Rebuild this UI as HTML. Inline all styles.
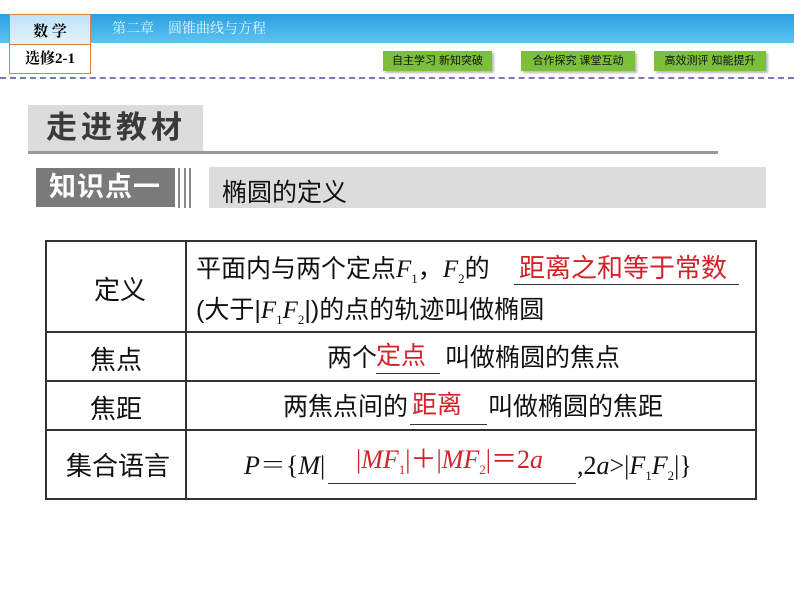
<!DOCTYPE html>
<html><head><meta charset="utf-8"><style>
body{margin:0;width:794px;height:596px;background:#fff;position:relative;overflow:hidden;font-family:"Liberation Sans","Noto Sans CJK SC",sans-serif}
.a{position:absolute}
.bar{left:0;top:14px;width:794px;height:29px;background:linear-gradient(#2c9fe0,#5cc4f2)}
.box{left:9px;top:14px;width:80px;height:58px;border:1px solid #d9833c;background:#fff}
.box .t{height:29px;background:linear-gradient(#bfe3f7,#e3f3fc);border-bottom:1px solid #d9833c;text-align:center;font:bold 15px "Liberation Serif","Noto Serif CJK SC",serif;line-height:34px}
.box .b{text-align:center;font:bold 15px "Liberation Serif","Noto Serif CJK SC",serif;line-height:28px}
.ch{left:112px;top:18px;color:#e8f6ff;font:14px "Noto Serif CJK SC",serif}
.dot{left:0;top:77px;width:794px;border-top:2px dashed #7b79b8}
.g{top:51px;height:20px;background:#7cbf3a;font-size:11px;line-height:20px;text-align:center;color:#111;box-shadow:2px 2px 2px #bbb}
.tx{position:absolute;font-size:24px;line-height:28px;color:#111;white-space:nowrap}
.r{color:#d2232a}
.u{position:absolute;height:1px;background:#333}
i{font-family:"Liberation Serif",serif}
sub{font-size:13px;font-family:"Liberation Serif",serif}
</style></head><body>
<div class="a bar"></div>
<div class="a box"><div class="t">数 学</div><div class="b">选修2-1</div></div>
<div class="a ch">第二章　圆锥曲线与方程</div>
<div class="a dot"></div>
<div class="a g" style="left:383px;width:109px">自主学习&nbsp;新知突破</div>
<div class="a g" style="left:521px;width:114px">合作探究&nbsp;课堂互动</div>
<div class="a g" style="left:654px;width:112px">高效测评&nbsp;知能提升</div>

<div class="a" style="left:28px;top:105px;width:175px;height:47px;background:#dcdcdc"></div>
<div class="a" style="left:46px;top:110px;font-size:31px;line-height:36px;letter-spacing:4px;font-weight:bold;color:#3a3a3a">走进教材</div>
<div class="a" style="left:28px;top:151px;width:690px;height:3px;background:#999"></div>

<div class="a" style="left:36px;top:168px;width:139px;height:39px;background:#7a7a7a"></div>
<div class="a" style="left:49px;top:171px;font-size:27px;line-height:32px;letter-spacing:1px;font-weight:bold;color:#fff">知识点一</div>
<div class="a" style="left:178px;top:168px;width:2px;height:40px;background:#888"></div>
<div class="a" style="left:184px;top:168px;width:2px;height:40px;background:#888"></div>
<div class="a" style="left:189px;top:168px;width:2px;height:40px;background:#888"></div>
<div class="a" style="left:209px;top:167px;width:557px;height:41px;background:#dcdcdc"></div>
<div class="a" style="left:222px;top:173px;font-size:25px;color:#111">椭圆的定义</div>

<div class="a" style="left:45px;top:240px;width:712px;height:260px;border:2px solid #333;box-sizing:border-box"></div>
<div class="a" style="left:185px;top:240px;width:2px;height:260px;background:#333"></div>
<div class="a" style="left:45px;top:331px;width:712px;height:2px;background:#333"></div>
<div class="a" style="left:45px;top:380px;width:712px;height:2px;background:#333"></div>
<div class="a" style="left:45px;top:429px;width:712px;height:2px;background:#333"></div>

<div class="tx" style="left:94px;top:276px;font-size:26px">定义</div>
<div class="tx" style="left:90px;top:346px;font-size:26px">焦点</div>
<div class="tx" style="left:90px;top:395px;font-size:26px">焦距</div>
<div class="tx" style="left:66px;top:452px;font-size:26px">集合语言</div>

<div class="tx" style="left:196px;top:255px;font-size:25px">平面内与两个定点<i>F</i><sub>1</sub>，<i>F</i><sub>2</sub>的</div>
<div class="u" style="left:514px;top:284px;width:225px"></div>
<div class="tx r" style="left:519px;top:254px;font-size:26px">距离之和等于常数</div>
<div class="tx" style="left:196px;top:296px;font-size:25px">(大于|<i>F</i><sub>1</sub><i>F</i><sub>2</sub>|)的点的轨迹叫做椭圆</div>

<div class="tx" style="left:327px;top:344px;font-size:25px">两个</div>
<div class="tx r" style="left:376px;top:342px;font-size:25px">定点</div>
<div class="u" style="left:376px;top:373px;width:64px"></div>
<div class="tx" style="left:445px;top:344px;font-size:25px">叫做椭圆的焦点</div>

<div class="tx" style="left:283px;top:393px;font-size:25px">两焦点间的</div>
<div class="tx r" style="left:412px;top:391px;font-size:25px">距离</div>
<div class="u" style="left:410px;top:424px;width:77px"></div>
<div class="tx" style="left:488px;top:393px;font-size:25px">叫做椭圆的焦距</div>

<div class="tx" style="left:244px;top:452px;font-size:26px;font-family:'Liberation Serif','Noto Serif CJK SC',serif"><i>P</i>＝{<i>M</i>|</div>
<div class="u" style="left:328px;top:483px;width:248px"></div>
<div class="tx r" style="left:356px;top:446px;font-size:26px;font-family:'Liberation Serif','Noto Sans CJK SC',serif">|<i>MF</i><sub>1</sub>|＋|<i>MF</i><sub>2</sub>|＝2<i>a</i></div>
<div class="tx" style="left:577px;top:452px;font-size:26px;font-family:'Liberation Serif',serif">,2<i>a</i>&gt;|<i>F</i><sub>1</sub><i>F</i><sub>2</sub>|}</div>
</body></html>
